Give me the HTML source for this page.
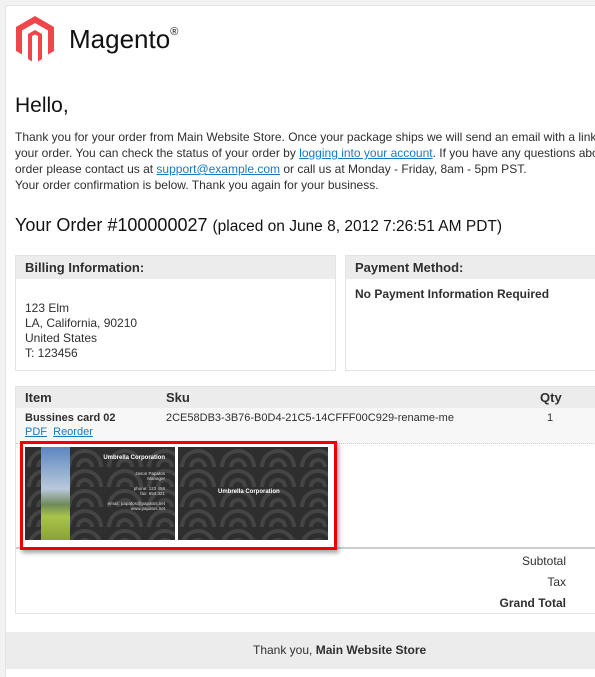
<!DOCTYPE html>
<html><head><style>
body{margin:0;background:#f2f2f2;font-family:"Liberation Sans",Arial,sans-serif;color:#2f2f2f;width:595px;height:676px;overflow:hidden;position:relative}
.wrap{position:absolute;left:5px;top:5px;width:589px;height:671px;background:#fff;border-left:1px solid #e3e3e3;border-top:1px solid #e3e3e3;overflow:hidden}
.a{position:absolute;white-space:nowrap}
p.t{position:absolute;left:9px;top:123px;margin:0;font-size:12px;line-height:16px;white-space:nowrap}
a{color:#1979c3;text-decoration:underline}
.box{position:absolute;border:1px solid #e3e3e3;background:#fff}
.bh{background:#ececec;height:23px;font-weight:bold;font-size:13px;line-height:23px;padding-left:9px}
.card{position:absolute;top:441px;width:150px;height:93px;background:#2e2e2e;overflow:hidden;
background-image:radial-gradient(circle at 50% 100%,transparent 5px,#444 5px,#444 9px,transparent 9px,transparent 14px,#444 14px,#444 18px,transparent 18px);background-size:40px 20px}
</style></head><body>
<div class="wrap">
<svg class="a" style="left:9px;top:9px" width="40" height="48" viewBox="0 0 40 48"><path d="M20 1 L39 12 V36 L33 39.5 V15.5 L20 8 L7 15.5 V39.5 L1 36 V12 Z" fill="#f0464b"/><path d="M13 19 L20 15 L27 19 V44 L23 46.5 V21 L20 19.5 L17 21 V46.5 L13 44 Z" fill="#f0464b"/></svg>
<div class="a" style="left:63px;top:18px;font-size:26px;color:#111">Magento<sup style="font-size:11px;vertical-align:top;position:relative;top:2px">®</sup></div>
<div class="a" style="left:9px;top:88px;font-size:21px;color:#111">Hello,</div>
<p class="t">Thank you for your order from Main Website Store. Once your package ships we will send an email with a link to track<br>your order. You can check the status of your order by <a>logging into your account</a>. If you have any questions about your<br>order please contact us at <a>support@example.com</a> or call us at Monday - Friday, 8am - 5pm PST.<br>Your order confirmation is below. Thank you again for your business.</p>
<div class="a" style="left:9px;top:209px;font-size:18px;color:#111">Your Order #100000027 <span style="font-size:15.5px">(placed on June 8, 2012 7:26:51 AM PDT)</span></div>
<div class="box" style="left:9px;top:249px;width:319px;height:114px"><div class="bh">Billing Information:</div>
<div style="font-size:12px;line-height:15px;padding:22px 0 0 9px">123 Elm<br>LA, California, 90210<br>United States<br>T: 123456</div></div>
<div class="box" style="left:339px;top:249px;width:260px;height:114px"><div class="bh">Payment Method:</div>
<div style="font-size:12px;font-weight:bold;padding:8px 0 0 9px">No Payment Information Required</div></div>
<div class="box" style="left:9px;top:380px;width:590px;height:226px;border-color:#e3e3e3"></div>
<div class="a" style="left:10px;top:381px;width:590px;height:21px;background:#ececec"></div>
<div class="a" style="left:10px;top:402px;width:590px;height:35px;background:#f7f7f7;border-bottom:1px dotted #ccc"></div>
<div class="a" style="left:19px;top:384px;font-size:13px;font-weight:bold">Item</div>
<div class="a" style="left:160px;top:384px;font-size:13px;font-weight:bold">Sku</div>
<div class="a" style="left:534px;top:384px;font-size:13px;font-weight:bold">Qty</div>
<div class="a" style="left:19px;top:406px;font-size:11px;font-weight:bold">Bussines card 02</div>
<div class="a" style="left:160px;top:406px;font-size:11px">2CE58DB3-3B76-B0D4-21C5-14CFFF00C929-rename-me</div>
<div class="a" style="left:541px;top:406px;font-size:11px">1</div>
<div class="a" style="left:19px;top:420px;font-size:11px"><a>PDF</a>&nbsp; <a>Reorder</a></div>
<div class="a" style="left:10px;top:541px;width:590px;height:2px;background:#ccc"></div>
<div class="a" style="left:14px;top:435px;width:311px;height:103px;border:3px solid #e00;box-shadow:2px 3px 4px rgba(0,0,0,.35)"></div>
<div class="card" style="left:19px"><div style="position:absolute;left:16px;top:0;width:29px;height:93px;background:linear-gradient(#5d86c0,#b9c9db 45%,#6f8a5a 62%,#a8c44a 75%,#8aa23a)"></div>
<div class="a" style="right:10px;top:8px;color:#fff;font-size:6px;font-weight:bold">Umbrella Corporation</div>
<div class="a" style="right:10px;top:24px;color:#ddd;font-size:4.5px;text-align:right;line-height:5px">Jason Papatos<br>Manager<br><br>phone: 123 456<br>fax: 654 321<br><br>email: papatos@papatos.net<br>www.papatos.net</div></div>
<div class="card" style="left:172px"><div class="a" style="left:40px;top:42px;color:#fff;font-size:6px;font-weight:bold">Umbrella Corporation</div></div>
<div class="a" style="right:29px;top:545px;font-size:12px;line-height:21px;text-align:right">Subtotal<br>Tax<br><b>Grand Total</b></div>
<div class="a" style="left:0;top:626px;width:600px;height:37px;background:#ececec;font-size:12px;line-height:37px;text-indent:247px">Thank you, <b>Main Website Store</b></div>
</div>
</body></html>
